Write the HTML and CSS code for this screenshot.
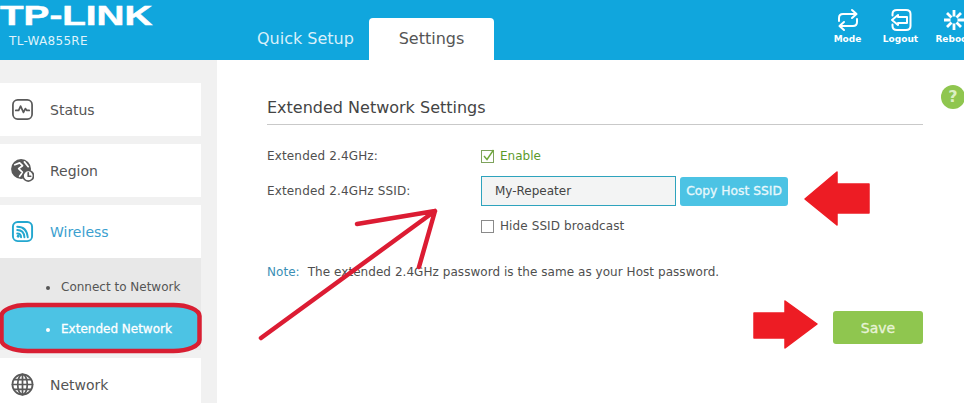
FILE: index.html
```html
<!DOCTYPE html>
<html lang="en">
<head>
<meta charset="utf-8">
<title>Extended Network Settings</title>
<link rel="stylesheet" href="styles.css">
</head>
<body>
<div class="page">
  <header class="header">
    <div class="brand">
      <div class="logo">TP-LINK</div>
      <div class="model">TL-WA855RE</div>
    </div>
    <nav class="tabs">
      <div class="tab">Quick Setup</div>
      <div class="tab tab-active">Settings</div>
    </nav>
    <div class="tools">
      <div class="tool">
        <svg class="tool-icon" viewBox="0 0 24 24"><path d="M3 13 V10 Q3 6 7 6 H20 M16 2 L20.500 6 L16 10 M21 11 V14 Q21 18 17 18 H4 M8 14 L3.500 18 L8 22"/></svg>
        <span>Mode</span>
      </div>
      <div class="tool">
        <svg class="tool-icon" viewBox="0 0 24 24"><path d="M3.500 7.500 V6 Q3.500 2 8 2 H17 Q21.500 2 21.500 6 V18 Q21.500 22 17 22 H8 Q3.500 22 3.500 18 V16.500 M3 12 L9 7 V9 H18 V15 H9 V17 Z"/></svg>
        <span>Logout</span>
      </div>
      <div class="tool">
        <svg class="tool-icon tool-icon-bold" viewBox="0 0 24 24"><path d="M12 2 V8.500 M12 15.500 V22 M2 12 H8.500 M15.500 12 H22 M5 5 L9.500 9.500 M14.500 14.500 L19 19 M19 5 L14.500 9.500 M9.500 14.500 L5 19"/></svg>
        <span>Reboot</span>
      </div>
    </div>
  </header>
  <div class="body">
    <aside class="sidebar">
      <div class="menu-item">
        <svg class="menu-icon" viewBox="0 0 24 24"><rect x="2" y="2" width="20" height="20" rx="5"/><path d="M5 13 H8 L10 8.500 L13 15 L15 11 L16.500 13 H19"/></svg>
        <span>Status</span>
      </div>
      <div class="menu-item">
        <svg class="menu-icon" viewBox="0 0 24 24"><circle class="fill-grey" cx="10.500" cy="10.500" r="9.500"/><path class="white-line" d="M4 6 L9 4 L12 7 L8 10 L12 14 L9 18 M14 3 L18 8"/><circle class="clock" cx="18" cy="17.500" r="5.500"/><path d="M18 14.500 V18 H20.500"/></svg>
        <span>Region</span>
      </div>
      <div class="menu-item menu-item-active">
        <svg class="menu-icon" viewBox="0 0 24 24"><rect x="2" y="2" width="20" height="20" rx="5"/><path d="M6.500 7 Q16.500 7 17.500 18 M6.500 10.500 Q13.500 10.500 14 18 M6.500 14 Q10.500 14 10.500 18"/><circle class="dot" cx="7.500" cy="17" r="1.500"/></svg>
        <span>Wireless</span>
      </div>
      <ul class="submenu">
        <li class="sub-item">Connect to Network</li>
        <li class="sub-item sub-item-active">Extended Network</li>
      </ul>
      <div class="menu-item menu-item-last">
        <svg class="menu-icon" viewBox="0 0 24 24"><circle cx="12" cy="12" r="10.500"/><ellipse cx="12" cy="12" rx="5" ry="10.500"/><path d="M12 1.500 V22.500 M1.500 12 H22.500 M3 7 H21 M3 17 H21"/></svg>
        <span>Network</span>
      </div>
    </aside>
    <main class="content">
      <h1 class="title">Extended Network Settings</h1>
      <div class="row row-enable">
        <div class="label">Extended 2.4GHz:</div>
        <label class="check check-on">
          <svg class="box" viewBox="0 0 14 14"><rect x="0.500" y="1.500" width="12" height="12"/><path class="tick" d="M3 7 L6 10.500 L12.500 1"/></svg>
          Enable
        </label>
      </div>
      <div class="row row-ssid">
        <div class="label">Extended 2.4GHz SSID:</div>
        <div class="ssid-value">My-Repeater</div>
        <button class="copy">Copy Host SSID</button>
      </div>
      <div class="row row-hide">
        <div class="label"></div>
        <label class="check">
          <svg class="box" viewBox="0 0 14 14"><rect x="0.500" y="1.500" width="12" height="12"/></svg>
          Hide SSID broadcast
        </label>
      </div>
      <p class="note"><span class="note-key">Note:</span>The extended 2.4GHz password is the same as your Host password.</p>
      <div class="actions"><button class="save">Save</button></div>
    </main>
  </div>
  <div class="help">?</div>
  <svg class="marks" viewBox="0 0 964 403">
    <rect class="ring" x="1.500" y="305" width="198" height="46" rx="26" ry="11"/>
    <path class="thin" d="M261 338 L435 211 M357 224 L435 211 L419 267"/>
    <polygon class="solid" points="805,199 837,172 837,184 869,184 869,213 837,213 837,225"/>
    <polygon class="solid" points="817,324 785,301 785,313 754,313 754,338 785,338 785,348"/>
  </svg>
</div>
</body>
</html>
```
FILE: styles.css
```css
* { box-sizing: border-box; }
html, body { margin: 0; padding: 0; }
body {
  font-family: "DejaVu Sans", Verdana, sans-serif;
  background: #fff;
  color: #4f4f4f;
}
.page {
  position: relative;
  width: 964px;
  height: 403px;
  overflow: hidden;
}
.header {
  display: flex;
  height: 60px;
  background: #10a6dd;
  color: #fff;
}
.brand { width: 257px; flex: none; }
.logo {
  height: 27px;
  padding-top: 2px;
  font-family: "Liberation Sans", Arial, sans-serif;
  font-weight: 700;
  font-size: 28px;
  line-height: 28px;
  white-space: nowrap;
  -webkit-text-stroke: 0.5px #fff;
  transform-origin: 0 0;
  transform: scaleX(1.380);
}
.model {
  margin: 7px 0 0 9px;
  font-size: 12px;
  letter-spacing: 0.3px;
  line-height: 14px;
  color: #dff3fb;
}
.tabs { display: flex; align-items: flex-end; }
.tab {
  height: 42px;
  font-size: 16px;
  line-height: 42px;
  color: #d8f0fa;
}
.tab:first-child { width: 112px; }
.tab-active {
  width: 125px;
  text-align: center;
  background: #fff;
  color: #555;
  border-radius: 4px 4px 0 0;
}
.tools {
  display: flex;
  flex: none;
  margin-left: auto;
  width: 146px;
  margin-right: -3px;
  padding-top: 8px;
}
.tool {
  width: 53px;
  flex: none;
  display: flex;
  flex-direction: column;
  align-items: center;
  font-size: 9px;
  font-weight: 700;
  line-height: 11px;
  white-space: nowrap;
}
.tool-icon {
  width: 24px;
  height: 24px;
  margin-bottom: 2px;
  fill: none;
  stroke: #fff;
  stroke-width: 2;
  stroke-linecap: round;
  stroke-linejoin: round;
}
.tool-icon-bold { stroke-width: 2.800; stroke-linecap: butt; }
.body { display: flex; height: 343px; }
.sidebar {
  width: 217px;
  flex: none;
  padding: 23px 16px 0 0;
  background: #f1f1f1;
}
.menu-item {
  display: flex;
  align-items: center;
  height: 53px;
  margin-bottom: 8px;
  padding-left: 11px;
  gap: 16px;
  background: #fff;
  font-size: 14px;
  color: #555;
}
.menu-item-active { margin-bottom: 0; color: #3b9fcf; }
.menu-item-last { margin-top: 8px; }
.menu-icon {
  width: 23px;
  height: 23px;
  flex: none;
  fill: none;
  stroke: #595959;
  stroke-width: 1.800;
  stroke-linecap: round;
  stroke-linejoin: round;
}
.menu-item-active .menu-icon { stroke: #23a7cf; stroke-width: 2; }
.dot { fill: #23a7cf; stroke: none; }
.fill-grey { fill: #595959; }
.white-line { stroke: #fff; }
.clock { fill: #fff; }
.submenu {
  margin: 0;
  padding: 0;
  list-style: none;
  height: 92px;
  background: #e8e8e8;
  overflow: hidden;
}
.sub-item {
  position: relative;
  height: 49px;
  padding: 22px 0 0 61px;
  font-size: 12px;
  line-height: 15px;
  color: #555;
}
.sub-item::before {
  content: "";
  position: absolute;
  left: 46px;
  top: 28px;
  width: 4px;
  height: 4px;
  border-radius: 50%;
  background: currentColor;
}
.sub-item-active {
  height: 43px;
  margin: 0 3px;
  padding: 15px 0 0 58px;
  border-radius: 10px;
  background: #4cc3e4;
  color: #fff;
  -webkit-text-stroke: 0.3px #fff;
}
.sub-item-active::before { left: 43px; top: 21px; }
.content {
  flex: 1;
  padding: 0 41px 0 50px;
  min-width: 0;
}
.title {
  height: 65px;
  margin: 0;
  padding: 38px 0 0;
  border-bottom: 1px solid #c9c9c9;
  font-size: 16px;
  font-weight: 400;
  line-height: 19px;
  color: #444;
}
.row {
  display: flex;
  align-items: center;
  font-size: 12px;
  color: #4f4f4f;
}
.row-enable { height: 20px; margin-top: 21px; }
.row-ssid { height: 30px; margin-top: 10px; }
.row-hide { height: 20px; margin-top: 10px; letter-spacing: 0.1px; }
.label { width: 214px; flex: none; letter-spacing: 0.15px; }
.check {
  display: flex;
  align-items: center;
  gap: 5px;
}
.check-on { color: #5c9a2c; }
.box {
  width: 14px;
  height: 14px;
  fill: none;
  stroke: #8a8a8a;
  stroke-width: 1;
}
.check-on .box { stroke: #7ea35c; }
.tick { stroke: #6fa83a; stroke-width: 1.400; }
.ssid-value {
  width: 195px;
  height: 30px;
  padding-left: 13px;
  border: 1px solid #2ea3bd;
  background: #f3f4f4;
  line-height: 28px;
  color: #444;
}
.copy {
  width: 108px;
  height: 29px;
  margin-left: 4px;
  padding: 0;
  border: 0;
  border-radius: 3px;
  background: #4cc3e4;
  color: #e8f8fc;
  font: 400 12.300px "DejaVu Sans", Verdana, sans-serif;
  -webkit-text-stroke: 0.3px #e8f8fc;
}
.note {
  margin: 28px 0 0;
  font-size: 12px;
  letter-spacing: 0.05px;
  line-height: 16px;
  color: #4f4f4f;
  white-space: nowrap;
}
.note-key { margin-right: 8px; color: #3b8fb5; }
.actions {
  display: flex;
  justify-content: flex-end;
  margin-top: 31px;
}
.save {
  width: 90px;
  height: 33px;
  padding: 0;
  border: 0;
  border-radius: 3px;
  background: #8fc64f;
  color: #e8f3d8;
  font: 400 14px "DejaVu Sans", Verdana, sans-serif;
  -webkit-text-stroke: 0.3px #e8f3d8;
}
.help {
  position: absolute;
  left: 941px;
  top: 85px;
  width: 24px;
  height: 24px;
  border-radius: 50%;
  background: #8fc64f;
  color: #dcefc4;
  font-size: 16px;
  font-weight: 700;
  line-height: 24px;
  text-align: center;
}
.marks {
  position: absolute;
  left: 0;
  top: 0;
  width: 964px;
  height: 403px;
  pointer-events: none;
}
.ring { fill: none; stroke: #d81f33; stroke-width: 4.500; }
.thin {
  fill: none;
  stroke: #dc1c33;
  stroke-width: 4.500;
  stroke-linecap: round;
  stroke-linejoin: round;
}
.solid {
  fill: #ed1c24;
  stroke: #ed1c24;
  stroke-width: 1.500;
  stroke-linejoin: round;
}
```
